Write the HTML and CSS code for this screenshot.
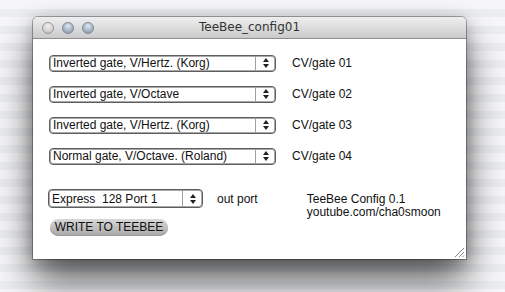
FILE: index.html
```html
<!DOCTYPE html>
<html>
<head>
<meta charset="utf-8">
<link rel="stylesheet" href="styles.css">
</head>
<body>
<div class="window">
  <div class="titlebar">
    <div class="lights">
      <span class="light close"></span>
      <span class="light"></span>
      <span class="light"></span>
    </div>
    <div class="title">TeeBee_config01</div>
  </div>
  <div class="content">
    <div class="rows">
      <div class="row">
        <div class="select wide"><span class="val">Inverted gate, V/Hertz. (Korg)</span><span class="arrows"><i class="up"></i><i class="down"></i></span></div>
        <span class="label">CV/gate 01</span>
      </div>
      <div class="row">
        <div class="select wide"><span class="val">Inverted gate, V/Octave</span><span class="arrows"><i class="up"></i><i class="down"></i></span></div>
        <span class="label">CV/gate 02</span>
      </div>
      <div class="row">
        <div class="select wide"><span class="val">Inverted gate, V/Hertz. (Korg)</span><span class="arrows"><i class="up"></i><i class="down"></i></span></div>
        <span class="label">CV/gate 03</span>
      </div>
      <div class="row">
        <div class="select wide"><span class="val">Normal gate, V/Octave. (Roland)</span><span class="arrows"><i class="up"></i><i class="down"></i></span></div>
        <span class="label">CV/gate 04</span>
      </div>
    </div>
    <div class="bottom">
      <div class="left">
        <div class="portrow">
          <div class="select narrow"><span class="val">Express&nbsp; 128 Port 1</span><span class="arrows"><i class="up"></i><i class="down"></i></span></div>
          <span class="outport">out port</span>
        </div>
        <div class="button">WRITE TO TEEBEE</div>
      </div>
      <div class="info">
        <div>TeeBee Config 0.1</div>
        <div>youtube.com/cha0smoon</div>
      </div>
    </div>
    <svg class="grip" width="12" height="12" viewBox="0 0 12 12">
      <path d="M11 2 L2 11 M11 6 L6 11 M11 9.5 L9.5 11" stroke="#888" stroke-width="1"/>
      <path d="M11 3 L3 11 M11 7 L7 11" stroke="#fff" stroke-width="1"/>
    </svg>
  </div>
</div>
</body>
</html>
```
FILE: styles.css
```css
html, body {
  margin: 0;
  padding: 0;
}
body {
  width: 505px;
  height: 292px;
  overflow: hidden;
  box-sizing: border-box;
  padding: 17px 0 0 33px;
  background: repeating-linear-gradient(to bottom, #f7f7f9 0px, #f7f7f9 9px, #eceef2 9px, #eceef2 17px);
  font-family: "Liberation Sans", Arial, sans-serif;
}
.window {
  width: 433px;
  height: 242px;
  border-radius: 5px 5px 0 0;
  box-shadow: 0 22px 38px rgba(0,0,0,0.62), 0 4px 16px rgba(0,0,0,0.25), 0 0 0 1px rgba(0,0,0,0.3);
  display: flex;
  flex-direction: column;
  background: #fff;
}
.titlebar {
  height: 22px;
  flex: none;
  border-radius: 5px 5px 0 0;
  background: linear-gradient(to bottom, #eeeeee 0%, #dddddd 50%, #cacaca 100%);
  border-bottom: 1px solid #8e8e8e;
  box-sizing: border-box;
  position: relative;
  display: flex;
  align-items: center;
}
.lights {
  display: flex;
  gap: 8px;
  padding-left: 9px;
}
.light {
  width: 12px;
  height: 12px;
  border-radius: 50%;
  box-sizing: border-box;
  border: 1px solid #7f8a96;
  background: radial-gradient(circle at 50% 30%, #dfe8f0 0%, #a5b6c6 55%, #8595a6 100%);
}
.light.close {
  border-color: #9a9a9a;
  background: radial-gradient(circle at 50% 30%, #f2f2f2 0%, #d2d2d2 60%, #b8b8b8 100%);
}
.title {
  position: absolute;
  left: 0;
  right: 0;
  top: 3px;
  text-align: center;
  font-family: "DejaVu Sans", sans-serif;
  font-size: 12px;
  color: #333;
}
.content {
  flex: 1;
  position: relative;
  padding: 16px 0 0 16px;
  font-size: 12px;
  color: #111;
}
.rows {
  display: flex;
  flex-direction: column;
  gap: 15px;
}
.row {
  display: flex;
  align-items: center;
  height: 16px;
}
.select {
  height: 17px;
  box-sizing: border-box;
  border: 1px solid #5e5e5e;
  border-radius: 4px;
  box-shadow: inset 0 0 0 1px #a8a8a8;
  display: flex;
  align-items: center;
  background: #fff;
}
.select.wide { width: 227px; }
.select.narrow { width: 155px; height: 19px; }
.val {
  flex: 1;
  padding-left: 3px;
  line-height: 14px;
  white-space: nowrap;
  overflow: hidden;
}
.arrows {
  width: 19px;
  height: 100%;
  border-left: 1px solid #a0a0a0;
  display: flex;
  flex-direction: column;
  align-items: center;
  justify-content: center;
  gap: 2px;
}
.arrows i {
  width: 0;
  height: 0;
  border-left: 3px solid transparent;
  border-right: 3px solid transparent;
}
.arrows .up { border-bottom: 4px solid #222; }
.arrows .down { border-top: 4px solid #222; }
.label {
  margin-left: 16px;
}
.bottom {
  display: flex;
  margin-top: 25px;
  margin-left: -1px;
}
.left {
  display: flex;
  flex-direction: column;
  gap: 11px;
}
.portrow {
  display: flex;
  align-items: center;
}
.outport {
  margin-left: 14px;
}
.button {
  margin-left: 2px;
  width: 118px;
  height: 17px;
  box-sizing: border-box;
  border-radius: 9px;
  background: linear-gradient(to bottom, #d9d9d9 0%, #bdbdbd 55%, #a9a9a9 100%);
  box-shadow: inset 0 -1px 0 #999;
  text-align: center;
  line-height: 17px;
  font-size: 12px;
  color: #111;
}
.info {
  margin-left: 49px;
  margin-top: 4px;
  line-height: 13px;
}
.grip {
  position: absolute;
  right: 1px;
  bottom: 1px;
}
```
